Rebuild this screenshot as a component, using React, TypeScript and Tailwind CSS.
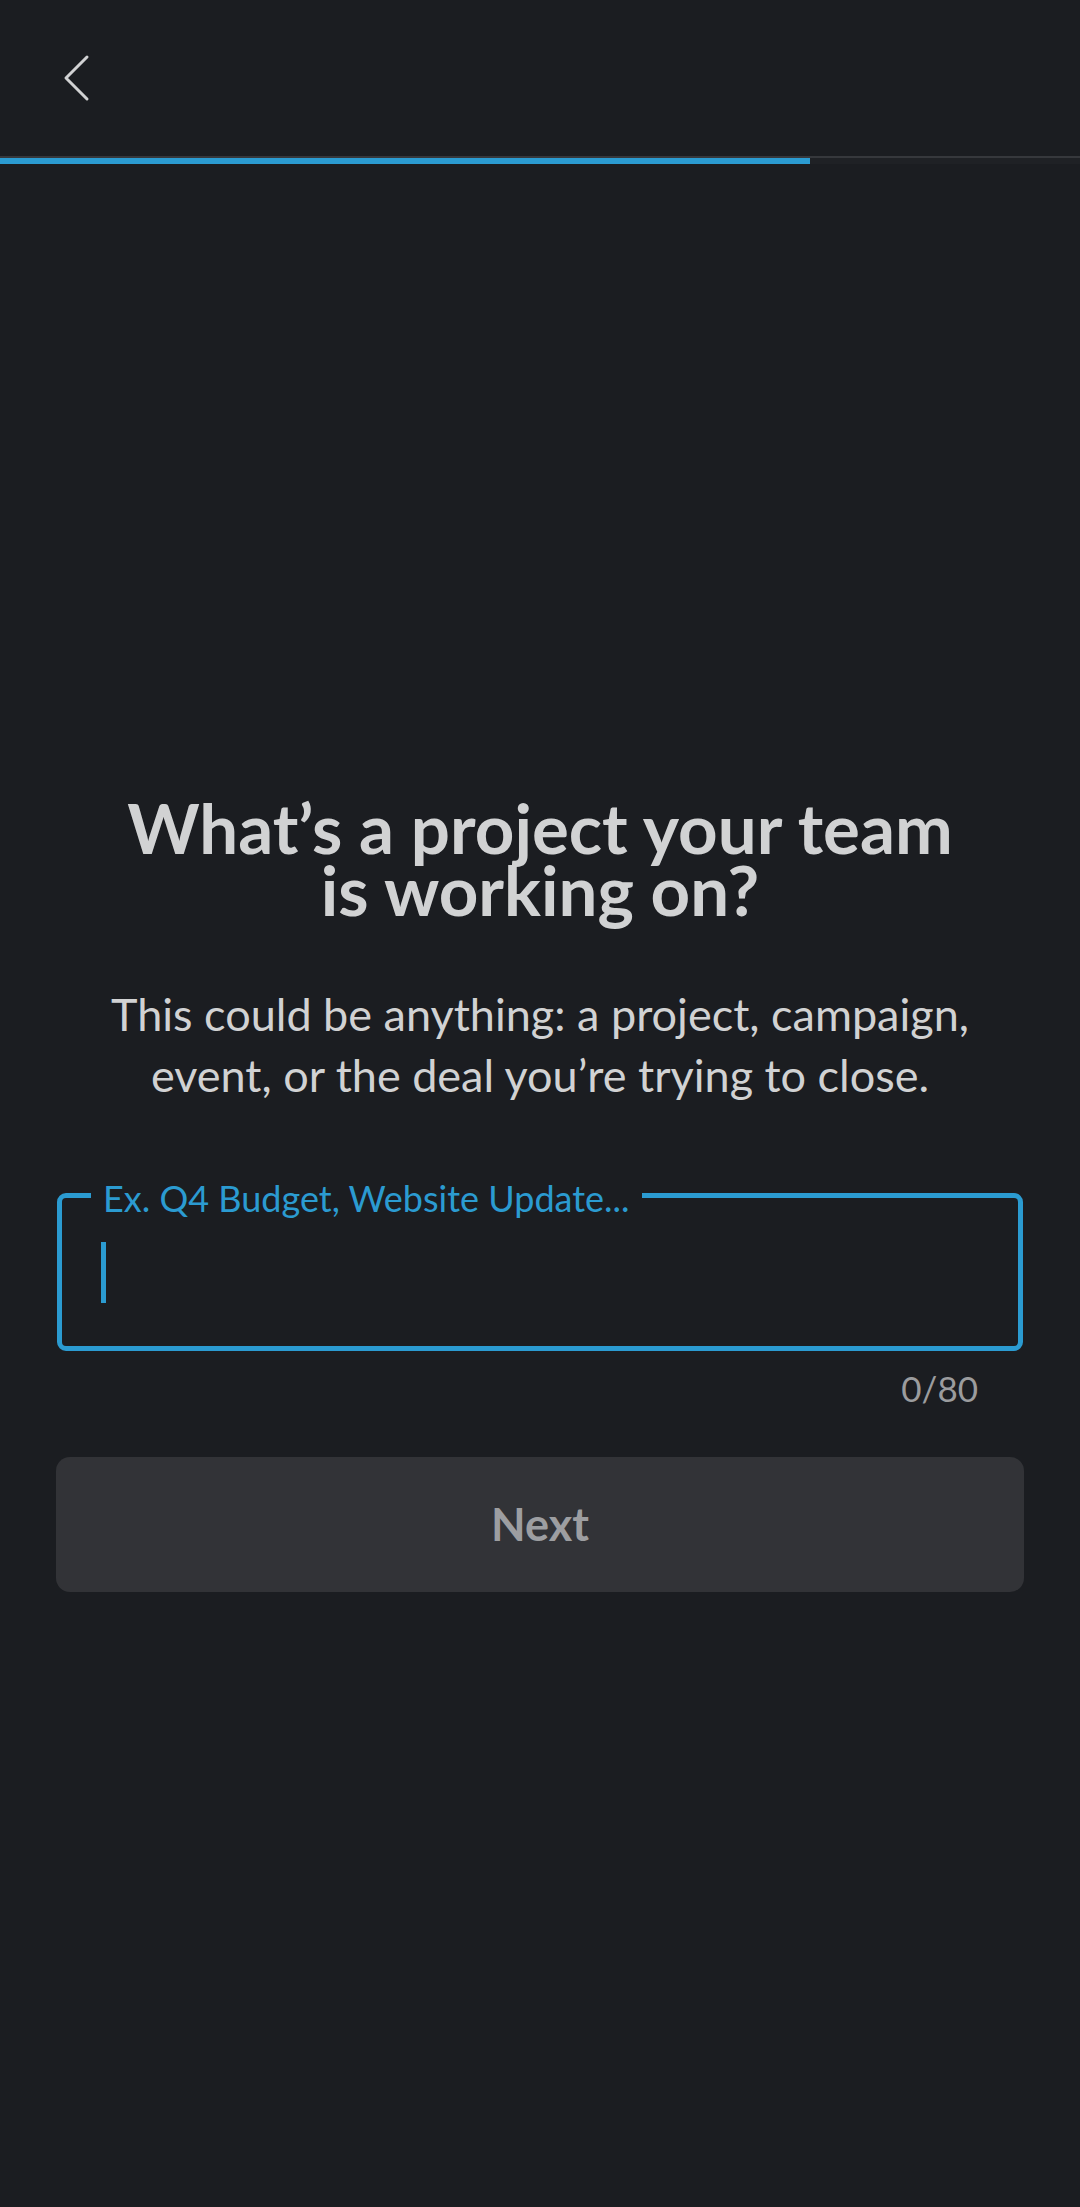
import { useState } from 'react';

const font = { fontFamily: 'Lato, "Open Sans", sans-serif' };

function BackChevron() {
  return (
    <svg width="30" height="48" viewBox="0 0 30 48" fill="none" className="text-[#d1d2d3]">
      <polyline points="24,3 3,24 24,45" stroke="currentColor" strokeWidth="3" strokeLinecap="round" strokeLinejoin="round" />
    </svg>
  );
}

export default function App() {
  const [value, setValue] = useState('');
  const max = 80;

  return (
    <div className="min-h-[2207px] w-full bg-[#1b1d21] text-[#d1d2d3]" style={font}>
      {/* Header */}
      <div className="h-[156px] flex items-center pl-[63px]">
        <button aria-label="Back" className="flex items-center">
          <BackChevron />
        </button>
      </div>

      {/* Progress */}
      <div className="h-[2px] bg-[#36383c]" />
      <div className="h-[6px] bg-[#1f2125]">
        <div className="h-full w-[810px] bg-[#2b9bd1]" />
      </div>

      {/* Content */}
      <div className="px-[56px] pt-[633px]">
        <h1 className="text-center text-[69px] leading-[62px] font-bold text-[#d1d2d3]">
          What’s a project your team
          <br />
          is working on?
        </h1>
        <p className="mt-[63px] text-center text-[45px] leading-[61px] text-[#d1d2d3]">
          This could be anything: a project, campaign,
          <br />
          event, or the deal you’re trying to close.
        </p>

        {/* Input */}
        <div className="relative mx-[1px] mt-[87px] h-[158px] rounded-[9px] border-[5px] border-[#2b9bd1]">
          <span className="absolute left-[29px] top-[-18px] whitespace-nowrap bg-[#1b1d21] px-[12px] text-[36px] leading-[36px] text-[#2b9bd1]">
            Ex. Q4 Budget, Website Update...
          </span>
          <div className="absolute left-[39px] top-[44px] h-[61px] w-[5px] bg-[#2b9bd1]" />
          <input
            value={value}
            onChange={(e) => setValue(e.target.value.slice(0, max))}
            className="h-full w-full bg-transparent pl-[50px] text-[40px] text-[#d1d2d3] outline-none caret-transparent"
          />
        </div>
        <div className="mt-[20px] pr-[46px] text-right text-[35px] leading-[35px] text-[#9b9c9e]">
          {value.length}/{max}
        </div>

        <button className="mt-[51px] flex h-[135px] w-full items-center justify-center rounded-[14px] bg-[#323337] text-[45px] font-bold text-[#9d9ea1]">
          Next
        </button>
      </div>
    </div>
  );
}
